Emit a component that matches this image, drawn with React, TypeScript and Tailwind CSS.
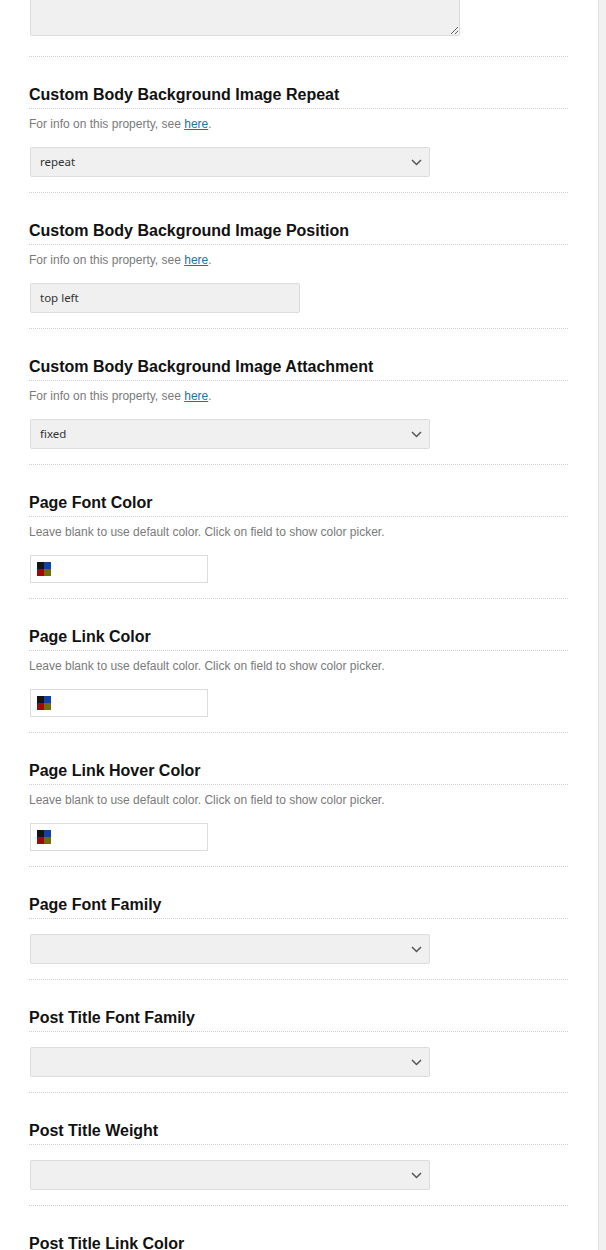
import React from 'react';

type Field =
  | { kind: 'select'; value?: string }
  | { kind: 'text'; value: string }
  | { kind: 'color' };

interface Setting {
  title: string;
  desc?: 'info' | 'color';
  field: Field;
}

const settings: Setting[] = [
  { title: 'Custom Body Background Image Repeat', desc: 'info', field: { kind: 'select', value: 'repeat' } },
  { title: 'Custom Body Background Image Position', desc: 'info', field: { kind: 'text', value: 'top left' } },
  { title: 'Custom Body Background Image Attachment', desc: 'info', field: { kind: 'select', value: 'fixed' } },
  { title: 'Page Font Color', desc: 'color', field: { kind: 'color' } },
  { title: 'Page Link Color', desc: 'color', field: { kind: 'color' } },
  { title: 'Page Link Hover Color', desc: 'color', field: { kind: 'color' } },
  { title: 'Page Font Family', field: { kind: 'select' } },
  { title: 'Post Title Font Family', field: { kind: 'select' } },
  { title: 'Post Title Weight', field: { kind: 'select' } },
  { title: 'Post Title Link Color', desc: 'color', field: { kind: 'color' } },
];

const Chevron = () => (
  <svg width="11" height="7" viewBox="0 0 11 7" fill="none">
    <path d="M1 1l4.5 4.5L10 1" stroke="#555" strokeWidth="1.5" />
  </svg>
);

const Swatch = () => (
  <div className="grid grid-cols-2 w-[14px] h-[14px]">
    <div className="bg-[#141414]" />
    <div className="bg-[#0f3fa8]" />
    <div className="bg-[#a00808]" />
    <div className="bg-[#6f6d10]" />
  </div>
);

const FieldControl: React.FC<{ field: Field }> = ({ field }) => {
  if (field.kind === 'select') {
    return (
      <div className="ml-px w-[400px] h-[30px] flex items-center justify-between pl-[9px] pr-[7px] bg-[#f0f0f0] border border-[#dcdcdc] rounded-[2px] text-[11.5px] text-[#333] font-['Noto_Sans',sans-serif]">
        <span>{field.value ?? ''}</span>
        <Chevron />
      </div>
    );
  }
  if (field.kind === 'text') {
    return (
      <div className="ml-px w-[270px] h-[30px] flex items-center pl-[9px] bg-[#f0f0f0] border border-[#dcdcdc] rounded-[2px] text-[11.5px] text-[#333] font-['Noto_Sans',sans-serif]">
        {field.value}
      </div>
    );
  }
  return (
    <div className="ml-px w-[178px] h-[28px] flex items-center pl-[6px] bg-white border border-[#dcdcdc]">
      <Swatch />
    </div>
  );
};

const SettingRow: React.FC<{ s: Setting }> = ({ s }) => (
  <div className="pt-[29px] pb-[15px] border-b border-dotted border-[#cfcfcf]">
    <h3 className="text-[16px] leading-[18px] font-bold text-[#111] pb-[4px] border-b border-dotted border-[#cfcfcf]">
      {s.title}
    </h3>
    {s.desc === 'info' && (
      <p className="mt-[7px] text-[12px] leading-[16px] text-[#7a7a7a]">
        For info on this property, see{' '}
        <a href="#" className="text-[#21759b] underline">
          here
        </a>
        .
      </p>
    )}
    {s.desc === 'color' && (
      <p className="mt-[7px] text-[12px] leading-[16px] text-[#7a7a7a]">
        Leave blank to use default color. Click on field to show color picker.
      </p>
    )}
    <div className={s.desc ? 'mt-[15px]' : 'mt-[15px]'}>
      <FieldControl field={s.field} />
    </div>
  </div>
);

export default function App() {
  return (
    <div className="flex h-[1250px] overflow-hidden bg-white font-['Liberation_Sans',Arial,sans-serif]">
      <div className="w-[598px] shrink-0 pl-[29px] pr-[30px]">
        <div className="pb-[20px] border-b border-dotted border-[#cfcfcf]">
          <textarea
            className="block ml-px w-[430px] h-[36px] bg-[#f0f0f0] border border-t-0 border-[#dcdcdc] rounded-b-[2px] outline-none"
            defaultValue=""
          />
        </div>
        {settings.map((s) => (
          <SettingRow key={s.title} s={s} />
        ))}
      </div>
      <div className="flex-1 bg-[#f1f1f1] border-l border-[#dedede]" />
    </div>
  );
}
